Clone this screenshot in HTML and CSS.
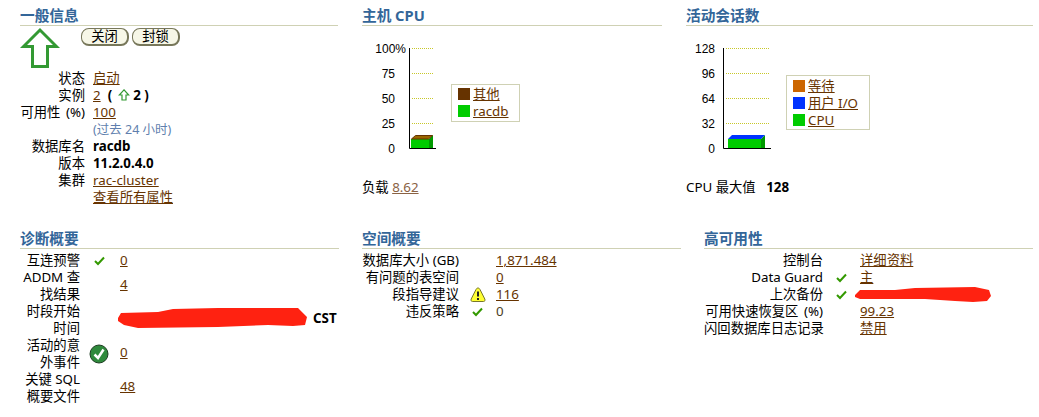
FILE: index.html
```html
<!DOCTYPE html>
<html lang="zh">
<head>
<meta charset="utf-8">
<title>概要</title>
<link rel="stylesheet" href="styles.css">
</head>
<body>
<main class="page">
  <div class="row row-top">
    <section>
      <h2 class="title">一般信息</h2>
      <div class="status-head">
        <svg class="big-arrow" width="40" height="42" viewBox="0 0 40 42"><path d="M20 3 3.500 19.500H12.500V39.500H27.500V19.500H36.500Z"/></svg>
        <div class="buttons"><button class="btn">关闭</button><button class="btn">封锁</button></div>
      </div>
      <div class="facts">
        <div class="lab">状态</div><div><a href="#">启动</a></div>
        <div class="lab">实例</div>
        <div class="inst"><a class="inst-num" href="#">2</a><b>(</b><svg class="mini-arrow" width="12" height="12" viewBox="0 0 12 12"><path d="M6 .8 1.300 6H4V11H8V6H10.700Z"/></svg><b>2 )</b></div>
        <div class="lab pct">可用性 (%)</div><div><a href="#">100</a></div>
        <div></div><div class="hint">(过去 24 小时)</div>
        <div class="lab">数据库名</div><div><b>racdb</b></div>
        <div class="lab">版本</div><div><b>11.2.0.4.0</b></div>
        <div class="lab">集群</div><div><a href="#">rac-cluster</a></div>
        <div></div><div><a href="#">查看所有属性</a></div>
      </div>
    </section>

    <section>
      <h2 class="title">主机 CPU</h2>
      <div class="chart">
        <svg width="80" height="125" viewBox="0 0 80 125">
          <path class="grid" d="M50 8.500H71"/>
          <path class="grid" d="M50 33.500H71"/>
          <path class="grid" d="M50 58.500H71"/>
          <path class="grid" d="M50 83.500H71"/>
          <path class="axis" d="M47.500 8V108.500H74"/>
          <path class="front" d="M49 99H67V108H49Z"/>
          <path class="side" d="M67 99 71 95V108H67Z"/>
          <path class="top-brown" d="M49.500 99 53.500 95.500H70.500L66.500 99Z"/>
          <text class="tick" x="44" y="12.500">100%</text>
          <text class="tick" x="33" y="37.500">75</text>
          <text class="tick" x="33" y="62.500">50</text>
          <text class="tick" x="33" y="87.500">25</text>
          <text class="tick" x="33" y="112.500">0</text>
        </svg>
        <ul class="legend legend-cpu">
          <li><i class="sw sw-brown"></i><a href="#">其他</a></li>
          <li><i class="sw sw-green"></i><a href="#">racdb</a></li>
        </ul>
      </div>
      <p class="foot">负载 <a class="soft" href="#">8.62</a></p>
    </section>

    <section>
      <h2 class="title">活动会话数</h2>
      <div class="chart">
        <svg width="90" height="125" viewBox="0 0 90 125">
          <path class="grid" d="M40 8.500H83"/>
          <path class="grid" d="M40 33.500H83"/>
          <path class="grid" d="M40 58.500H83"/>
          <path class="grid" d="M40 83.500H83"/>
          <path class="axis" d="M37.500 8V108.500H85"/>
          <path class="front" d="M42 99H75V108H42Z"/>
          <path class="side" d="M75 99 79 95V108H75Z"/>
          <path class="top-blue" d="M42 99 46 95H79L75 99Z"/>
          <text class="tick" x="29" y="12.500">128</text>
          <text class="tick" x="29" y="37.500">96</text>
          <text class="tick" x="29" y="62.500">64</text>
          <text class="tick" x="29" y="87.500">32</text>
          <text class="tick" x="29" y="112.500">0</text>
        </svg>
        <ul class="legend legend-sess">
          <li><i class="sw sw-orange"></i><a href="#">等待</a></li>
          <li><i class="sw sw-blue"></i><a href="#">用户 I/O</a></li>
          <li><i class="sw sw-green"></i><a href="#">CPU</a></li>
        </ul>
      </div>
      <p class="foot">CPU 最大值 <b class="max">128</b></p>
    </section>
  </div>

  <div class="row row-bottom">
    <section>
      <h2 class="title">诊断概要</h2>
      <div class="tbl tbl-diag">
        <div class="lab">互连预警</div>
        <div class="ico"><svg width="11" height="10" viewBox="0 0 11 10"><path class="chk" d="M1 5 4 8 10 1.500"/></svg></div>
        <div class="val"><a href="#">0</a></div>

        <div class="lab">ADDM 查<br>找结果</div><div></div>
        <div class="val val-tall"><a href="#">4</a></div>

        <div class="lab">时段开始<br>时间</div><div></div>
        <div class="val blob-cell">
          <svg class="blob" width="189" height="20" viewBox="0 0 189 20"><path d="M0 10 3 5 40 4 55 1 100 0H180L189 9 187 17 175 18 150 17 100 19 20 20 6 17 0 13Z"/></svg>
          <b class="zone">CST</b>
        </div>

        <div class="lab">活动的意<br>外事件</div>
        <div class="ico">
          <svg width="20" height="20" viewBox="0 0 20 20"><circle cx="10" cy="10" r="9" class="ok-disc"/><path class="ok-mark" d="M5.500 10.500 9 14 14.500 5.500"/></svg>
        </div>
        <div class="val val-tall"><a href="#">0</a></div>

        <div class="lab">关键 SQL<br>概要文件</div><div></div>
        <div class="val val-tall"><a href="#">48</a></div>
      </div>
    </section>

    <section>
      <h2 class="title">空间概要</h2>
      <div class="tbl tbl-space">
        <div class="lab">数据库大小 (GB)</div><div></div><div class="val"><a href="#">1,871.484</a></div>
        <div class="lab">有问题的表空间</div><div></div><div class="val"><a href="#">0</a></div>
        <div class="lab">段指导建议</div>
        <div class="ico"><svg class="over" width="16" height="16" viewBox="0 0 16 16"><path class="warn" d="M8 1C9 1 9.600 1.700 10 2.500L14.800 12C15.500 13.500 14.700 14.500 13.400 14.500H2.600C1.300 14.500.5 13.500 1.200 12L6 2.500C6.400 1.700 7 1 8 1Z"/><path class="warn-mark" d="M8 4.500V9.500M8 11V13"/></svg></div>
        <div class="val"><a href="#">116</a></div>
        <div class="lab">违反策略</div>
        <div class="ico"><svg width="11" height="10" viewBox="0 0 11 10"><path class="chk" d="M1 5 4 8 10 1.500"/></svg></div>
        <div class="val plain">0</div>
      </div>
    </section>

    <section>
      <h2 class="title">高可用性</h2>
      <div class="tbl tbl-ha">
        <div class="lab">控制台</div><div></div><div class="val"><a href="#">详细资料</a></div>
        <div class="lab">Data Guard</div>
        <div class="ico"><svg width="11" height="10" viewBox="0 0 11 10"><path class="chk" d="M1 5 4 8 10 1.500"/></svg></div>
        <div class="val"><a href="#">主</a></div>
        <div class="lab">上次备份</div>
        <div class="ico"><svg width="11" height="10" viewBox="0 0 11 10"><path class="chk" d="M1 5 4 8 10 1.500"/></svg></div>
        <div class="val blob-cell"><svg class="blob blob-ha" width="136" height="16" viewBox="0 0 136 16"><path d="M0 8 5 3H40L60 1 120 0 134 3 136 9 132 14 118 15 100 14 70 12H5L0 10Z"/></svg></div>
        <div class="lab pct">可用快速恢复区 (%)</div><div></div><div class="val"><a href="#">99.23</a></div>
        <div class="lab">闪回数据库日志记录</div><div></div><div class="val"><a href="#">禁用</a></div>
      </div>
    </section>
  </div>
</main>
</body>
</html>
```

FILE: styles.css
```css
* { box-sizing: border-box; }
html, body { margin: 0; padding: 0; background: #fff; }
body {
  font-family: "Noto Sans", "Noto Sans CJK SC", sans-serif;
  font-size: 13.33px;
  line-height: 17px;
  color: #000;
  overflow: hidden;
}
.page { width: 1039px; height: 417px; padding-left: 20px; }
.row { display: grid; }
.row-top { grid-template-columns: 318px 300px 347px; column-gap: 24px; height: 223px; }
.row-bottom { grid-template-columns: 319px 319px 329px; column-gap: 23px; }

.title {
  margin: 0;
  height: 26px;
  padding-top: 6px;
  font-size: 14.67px;
  line-height: 19px;
  font-weight: 700;
  color: #336699;
  border-bottom: 1px solid #cfd1b4;
}

a { color: #663300; text-decoration: underline; }
b { font-weight: 700; }

.status-head { display: flex; align-items: flex-start; gap: 21px; height: 43.5px; }
.big-arrow { display: block; margin-top: 1px; }
.big-arrow path { fill: #fff; stroke: #339933; stroke-width: 3; }
.buttons { display: flex; gap: 3px; margin-top: 2px; }
.btn {
  width: 48px;
  height: 18px;
  padding: 0;
  font: inherit;
  line-height: 15px;
  color: #000;
  background: #f7f7e7;
  border: 1px solid #77775a;
  border-right-width: 2px;
  border-bottom-width: 2px;
  border-radius: 8px;
}

.facts { display: grid; grid-template-columns: 65px 1fr; column-gap: 8px; }
.lab { text-align: right; white-space: nowrap; }
.pct { word-spacing: 2px; }
.inst { display: flex; align-items: center; gap: 6px; }
.inst-num { margin-right: 1px; }
.mini-arrow { margin-right: -3px; }
.mini-arrow path { fill: #fff; stroke: #339933; stroke-width: 1.200; }
.hint { color: #5f7fae; font-size: 12.500px; }

.chart { display: flex; align-items: center; margin-top: 14px; height: 125px; }
.chart svg { display: block; flex: none; }
.legend {
  list-style: none;
  margin: 0 0 0 9px;
  padding: 1px 10px 1px 6px;
  border: 1px solid #cfd1b4;
}
.legend-sess { margin-left: 10px; padding-right: 11px; }
.legend li { display: flex; align-items: center; gap: 3px; height: 17px; }
.legend a { padding-top: 1px; }
.sw { display: block; width: 12px; height: 12px; }
.sw-brown { background: #663300; }
.sw-green { background: #00cc00; }
.sw-orange { background: #cc6600; }
.sw-blue { background: #0033ff; }

.grid { fill: none; stroke: #c8c82a; stroke-width: 1; stroke-dasharray: 1 1; }
.axis { fill: none; stroke: #000; stroke-width: 1; }
.front { fill: #00cc00; }
.side { fill: #009900; }
.top-brown { fill: #996600; stroke: #663300; stroke-width: 1; }
.top-blue { fill: #0033ff; }
.tick { font-family: "Liberation Sans", sans-serif; font-size: 12px; text-anchor: end; fill: #000; }

.foot { margin: 14px 0 0; }
.soft { color: #8a6244; }
.max { margin-left: 7px; }

.tbl { display: grid; margin-top: 3px; align-items: center; }
.tbl-diag { grid-template-columns: 60px 40px 1fr; }
.tbl-space { grid-template-columns: 97px 37px 1fr; }
.tbl-ha { grid-template-columns: 119px 37px 1fr; }
.ico { display: flex; justify-content: center; align-items: center; height: 17px; }
.tbl-diag .ico { padding-right: 2px; }
.ico svg { display: block; flex: none; overflow: visible; }
.chk { fill: none; stroke: #339900; stroke-width: 2; }
.ok-disc { fill: #2f8a3c; stroke: #1d3d22; stroke-width: 1; }
.ok-mark { fill: none; stroke: #fff; stroke-width: 2.500; }
.warn { fill: #ffff33; stroke: #77772a; stroke-width: 1; }
.warn-mark { fill: none; stroke: #222; stroke-width: 2; }
.val { white-space: nowrap; }
.val-tall { margin-bottom: 3px; }
.plain { color: #4a3d1c; }
.blob-cell { display: flex; align-items: center; gap: 6px; }
.blob { display: block; flex: none; margin: 0 0 5px -2px; }
.zone { margin-bottom: 3px; }
.blob-ha { margin: 0 0 0 -5px; }
.blob path { fill: #ff2211; }
```
